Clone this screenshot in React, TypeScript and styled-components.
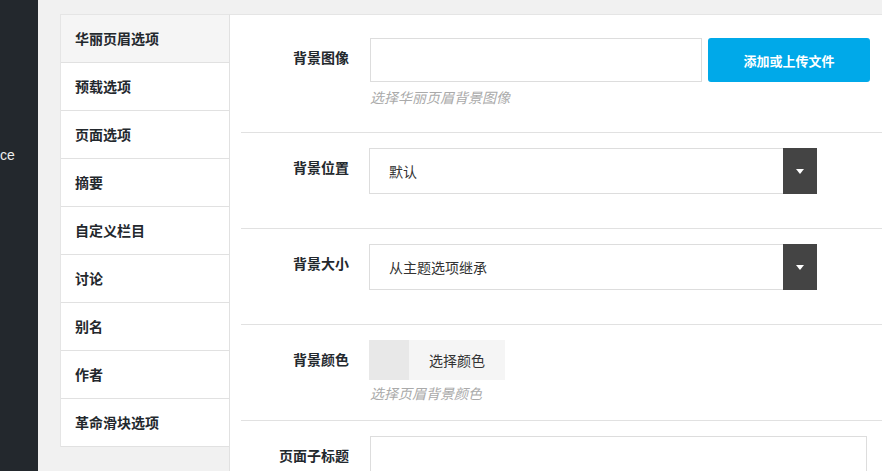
import { createGlobalStyle } from "styled-components";
import styled from "styled-components";

const tabs = [
  "华丽页眉选项",
  "预载选项",
  "页面选项",
  "摘要",
  "自定义栏目",
  "讨论",
  "别名",
  "作者",
  "革命滑块选项",
];

export default function App() {
  return (
    <>
      <GlobalStyle />
      <PageWrapper>
        <AdminMenu>
          <MenuLabel>ce</MenuLabel>
        </AdminMenu>
        <MainArea>
          <MetaBox>
            <TabList>
              {tabs.map((t, i) => (
                <TabItem key={t} $active={i === 0}>
                  {t}
                </TabItem>
              ))}
            </TabList>
            <Panel>
              <FieldRow $height={111} $top={16}>
                <FieldLabel>背景图像</FieldLabel>
                <FieldBody>
                  <UploadLine>
                    <TextInput $width={332} />
                    <UploadButton>添加或上传文件</UploadButton>
                  </UploadLine>
                  <Hint>选择华丽页眉背景图像</Hint>
                </FieldBody>
              </FieldRow>

              <FieldRow>
                <FieldLabel>背景位置</FieldLabel>
                <FieldBody>
                  <SelectBox>
                    <span>默认</span>
                    <SelectArrow>
                      <svg width="8" height="5" viewBox="0 0 8 5">
                        <path d="M0 0h8L4 5z" fill="#fff" />
                      </svg>
                    </SelectArrow>
                  </SelectBox>
                </FieldBody>
              </FieldRow>

              <FieldRow>
                <FieldLabel>背景大小</FieldLabel>
                <FieldBody>
                  <SelectBox>
                    <span>从主题选项继承</span>
                    <SelectArrow>
                      <svg width="8" height="5" viewBox="0 0 8 5">
                        <path d="M0 0h8L4 5z" fill="#fff" />
                      </svg>
                    </SelectArrow>
                  </SelectBox>
                </FieldBody>
              </FieldRow>

              <FieldRow>
                <FieldLabel>背景颜色</FieldLabel>
                <FieldBody>
                  <ColorPicker>
                    <Swatch />
                    <PickerText>选择颜色</PickerText>
                  </ColorPicker>
                  <Hint $gap={2}>选择页眉背景颜色</Hint>
                </FieldBody>
              </FieldRow>

              <FieldRow>
                <FieldLabel>页面子标题</FieldLabel>
                <FieldBody>
                  <TextInput $width={497} />
                </FieldBody>
              </FieldRow>
            </Panel>
          </MetaBox>
        </MainArea>
      </PageWrapper>
    </>
  );
}

const GlobalStyle = createGlobalStyle`
  html, body {
    margin: 0;
    padding: 0;
    height: 100%;
    overflow: hidden;
  }
  body {
    font-family: "Noto Sans CJK SC", "Liberation Sans", sans-serif;
    background: #f1f1f1;
  }
  * {
    box-sizing: border-box;
  }
`;

const PageWrapper = styled.div`
  display: flex;
  height: 471px;
  overflow: hidden;
`;

const AdminMenu = styled.div`
  width: 38px;
  flex-shrink: 0;
  background: #23282d;
  padding-top: 145px;
`;

const MenuLabel = styled.div`
  color: #eeeeee;
  font-family: "Liberation Sans", sans-serif;
  font-size: 14px;
  line-height: 20px;
`;

const MainArea = styled.div`
  flex: 1;
  background: #f1f1f1;
  padding: 14px 0 0 22px;
  overflow: hidden;
`;

const MetaBox = styled.div`
  display: flex;
  width: 900px;
  height: 100%;
`;

const TabList = styled.ul`
  list-style: none;
  margin: 0;
  padding: 0;
  width: 169px;
  flex-shrink: 0;
  align-self: flex-start;
  border-top: 1px solid #e5e5e5;
  border-left: 1px solid #e5e5e5;
`;

const TabItem = styled.li<{ $active?: boolean }>`
  height: 48px;
  padding-left: 14px;
  padding-bottom: 2px;
  display: flex;
  align-items: center;
  font-size: 14px;
  font-weight: 600;
  color: #23282d;
  background: ${(p) => (p.$active ? "#f5f5f5" : "#ffffff")};
  border-bottom: 1px solid #e1e1e1;
`;

const Panel = styled.div`
  flex: 1;
  background: #ffffff;
  border-top: 1px solid #e5e5e5;
  border-left: 1px solid #e1e1e1;
  padding: 7px 0 0 11px;
`;

const FieldRow = styled.div<{ $height?: number; $top?: number }>`
  display: flex;
  align-items: flex-start;
  height: ${(p) => p.$height ?? 96}px;
  padding-top: ${(p) => p.$top ?? 15}px;
  border-bottom: 1px solid #e1e1e1;
`;

const FieldLabel = styled.div`
  width: 108px;
  margin-right: 21px;
  text-align: right;
  padding-top: 9px;
  font-size: 14px;
  line-height: 20px;
  font-weight: 700;
  color: #23282d;
`;

const FieldBody = styled.div`
  display: flex;
  flex-direction: column;
`;

const UploadLine = styled.div`
  display: flex;
  gap: 6px;
`;

const TextInput = styled.div<{ $width: number }>`
  width: ${(p) => p.$width}px;
  height: 44px;
  border: 1px solid #dddddd;
  background: #ffffff;
`;

const UploadButton = styled.button`
  width: 162px;
  height: 44px;
  border: none;
  border-radius: 3px;
  background: #00a9e9;
  color: #ffffff;
  font-family: "Noto Sans CJK SC", sans-serif;
  font-size: 13px;
  font-weight: 700;
`;

const Hint = styled.div<{ $gap?: number }>`
  margin-top: ${(p) => p.$gap ?? 4}px;
  font-size: 14px;
  line-height: 22px;
  font-style: italic;
  color: #aaaaaa;
`;

const SelectBox = styled.div`
  width: 448px;
  height: 46px;
  margin-left: -1px;
  border: 1px solid #dddddd;
  display: flex;
  align-items: center;
  justify-content: space-between;
  padding-left: 19px;
  font-size: 14px;
  color: #333333;
`;

const SelectArrow = styled.div`
  width: 34px;
  height: 46px;
  margin-right: -1px;
  background: #444444;
  display: flex;
  align-items: center;
  justify-content: center;
`;

const ColorPicker = styled.div`
  display: flex;
  height: 40px;
  width: 136px;
  margin-left: -1px;
  background: #f5f5f5;
`;

const Swatch = styled.div`
  width: 40px;
  height: 40px;
  background: #e8e8e8;
`;

const PickerText = styled.div`
  flex: 1;
  display: flex;
  align-items: center;
  justify-content: center;
  font-size: 14px;
  color: #333333;
`;
